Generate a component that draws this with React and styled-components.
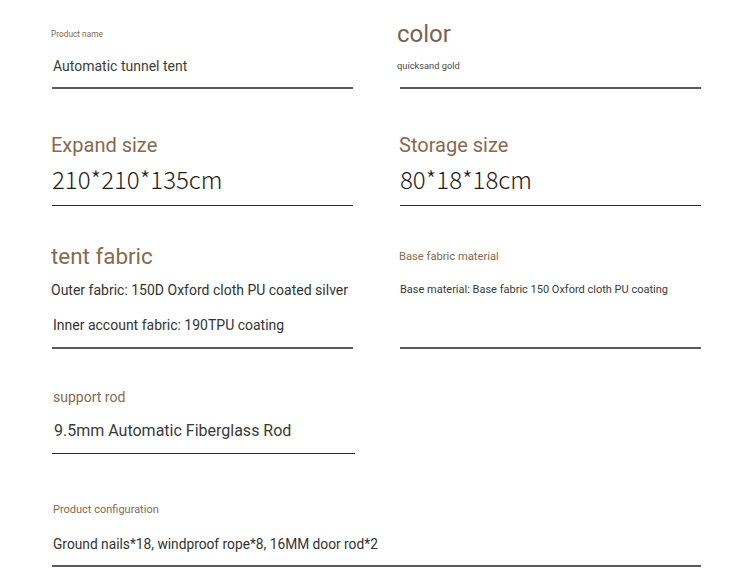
import React from 'react';
import styled, { createGlobalStyle } from 'styled-components';

const GlobalStyle = createGlobalStyle`
  html, body {
    margin: 0;
    padding: 0;
    background: #ffffff;
  }
  body {
    font-family: Roboto, "Noto Sans", "Liberation Sans", sans-serif;
  }
`;

const brown = '#87694f';

const Sheet = styled.div`
  width: 750px;
  height: 579px;
  box-sizing: border-box;
  padding: 19px 0 0 52px;
  background: #ffffff;
  overflow: hidden;
`;

const Row = styled.div`
  display: grid;
  grid-template-columns: 301px 301px;
  column-gap: 47px;
  margin-top: ${p => p.$top || 0}px;
`;

const Field = styled.div`
  display: flex;
  flex-direction: column;
  grid-column: ${p => (p.$wide ? '1 / span 2' : 'auto')};
`;

const Head = styled.div`
  height: 30px;
  display: flex;
  align-items: center;
  color: ${p => p.$color || brown};
  font-size: ${p => p.$size}px;
  margin-left: ${p => p.$shift || 0}px;
  white-space: nowrap;
`;

const Values = styled.div`
  display: flex;
  flex-direction: column;
  gap: ${p => p.$lines || 10}px;
  margin-top: ${p => p.$gap || 5}px;
  margin-bottom: ${p => p.$after || 9}px;
`;

const Value = styled.div`
  line-height: 24px;
  font-size: ${p => p.$size || 14}px;
  color: ${p => p.$color || '#3c3c3c'};
  margin-left: ${p => p.$shift || 0}px;
  white-space: nowrap;
`;

const BigValue = styled.div`
  line-height: 30px;
  font-family: "Noto Sans CJK SC", "Noto Sans", sans-serif;
  font-weight: 300;
  font-size: 24px;
  color: #1c1c1c;
  white-space: nowrap;
`;

const Rule = styled.div`
  margin-top: auto;
  margin-right: ${p => p.$extend ? -2 : 0}px;
  height: ${p => (p.$thin ? 1 : 2)}px;
  background: ${p => (p.$thin ? '#2a2a2a' : '#5a5a5a')};
`;

export default function App() {
  return (
    <Sheet>
      <GlobalStyle />

      <Row>
        <Field>
          <Head $size={8.3} $shift={-1}>Product name</Head>
          <Values>
            <Value $shift={1}>Automatic tunnel tent</Value>
          </Values>
          <Rule />
        </Field>
        <Field>
          <Head $size={24} $color="#7a6352" $shift={-3}>color</Head>
          <Values>
            <Value $size={9.3} $color="#4a4a4a" $shift={-3}>quicksand gold</Value>
          </Values>
          <Rule />
        </Field>
      </Row>

      <Row $top={41}>
        <Field>
          <Head $size={20} $shift={-1}>Expand size</Head>
          <Values $gap={4} $after={11}>
            <BigValue>210*210*135cm</BigValue>
          </Values>
          <Rule $thin />
        </Field>
        <Field>
          <Head $size={20} $shift={-1}>Storage size</Head>
          <Values $gap={4} $after={11}>
            <BigValue>80*18*18cm</BigValue>
          </Values>
          <Rule $thin />
        </Field>
      </Row>

      <Row $top={35}>
        <Field>
          <Head $size={22.4} $shift={-1}>tent fabric</Head>
          <Values $gap={7} $lines={11} $after={10}>
            <Value $size={14} $color="#333333" $shift={-1}>Outer fabric: 150D Oxford cloth PU coated silver</Value>
            <Value $size={14} $color="#333333" $shift={1}>Inner account fabric: 190TPU coating</Value>
          </Values>
          <Rule />
        </Field>
        <Field>
          <Head $size={11.2} $shift={-1}>Base fabric material</Head>
          <Values $gap={7}>
            <Value $size={11} $color="#3a3a3a">Base material: Base fabric 150 Oxford cloth PU coating</Value>
          </Values>
          <Rule />
        </Field>
      </Row>

      <Row $top={33}>
        <Field>
          <Head $size={14} $shift={1}>support rod</Head>
          <Values $gap={7} $after={10}>
            <Value $size={16} $color="#3a3a3a" $shift={2}>9.5mm Automatic Fiberglass Rod</Value>
          </Values>
          <Rule $thin $extend />
        </Field>
      </Row>

      <Row $top={40}>
        <Field $wide>
          <Head $size={11} $shift={1}>Product configuration</Head>
          <Values $gap={8}>
            <Value $size={13.75} $color="#333333" $shift={1}>Ground nails*18, windproof rope*8, 16MM door rod*2</Value>
          </Values>
          <Rule />
        </Field>
      </Row>
    </Sheet>
  );
}
